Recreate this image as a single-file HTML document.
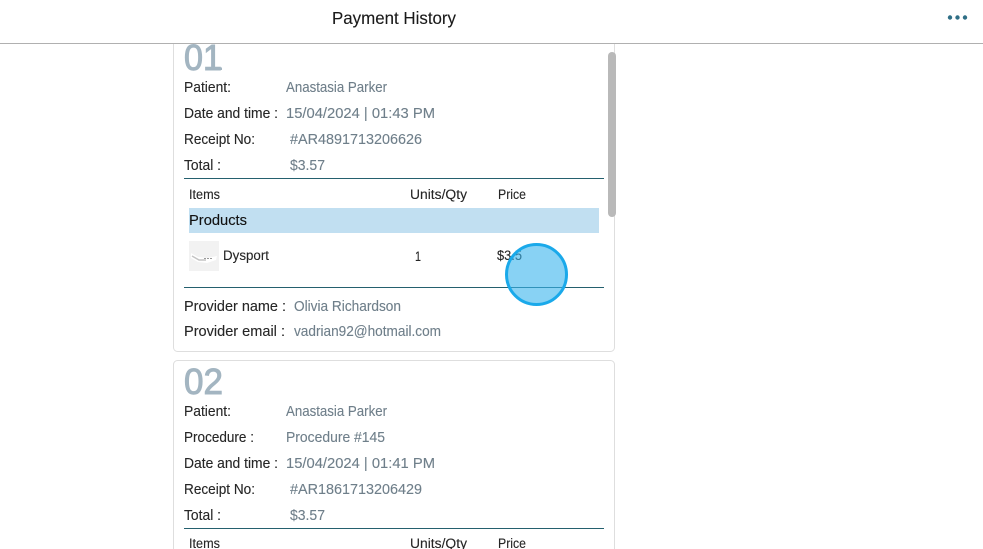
<!DOCTYPE html>
<html>
<head>
<meta charset="utf-8">
<title>Payment History</title>
<style>
html,body{margin:0;padding:0;background:#fff;width:983px;height:549px;overflow:hidden}
svg{display:block}
text{font-family:"Liberation Sans",Arial,sans-serif;font-size:14.5px;fill:#262626;stroke:#262626;stroke-width:.12px}
.v{fill:#6f7f8a;stroke:#6f7f8a}
.s{font-size:13.5px}
.n{font-size:36px;fill:#a3b5c1;stroke:#a3b5c1;stroke-width:1px}
</style>
</head>
<body>
<svg width="983" height="549" viewBox="0 0 983 549" xmlns="http://www.w3.org/2000/svg">
<rect width="983" height="549" fill="#fff"/>

<!-- Card 1 -->
<rect x="173.5" y="20.5" width="441" height="331" rx="4" fill="#fff" stroke="#dedede"/>
<text class="n" x="184" y="70" textLength="38" lengthAdjust="spacingAndGlyphs">01</text>
<rect x="208" y="67.5" width="14" height="2.5" fill="#a3b5c1"/>
<text x="184" y="92" textLength="47" lengthAdjust="spacingAndGlyphs">Patient:</text>
<text class="v" x="286" y="92" textLength="101" lengthAdjust="spacingAndGlyphs">Anastasia Parker</text>
<text x="184" y="118" textLength="94" lengthAdjust="spacingAndGlyphs">Date and time :</text>
<text class="v" x="286" y="118" textLength="149" lengthAdjust="spacingAndGlyphs">15/04/2024 | 01:43 PM</text>
<text x="184" y="144" textLength="71" lengthAdjust="spacingAndGlyphs">Receipt No:</text>
<text class="v" x="290" y="144" textLength="132" lengthAdjust="spacingAndGlyphs">#AR4891713206626</text>
<text x="184" y="170" textLength="37" lengthAdjust="spacingAndGlyphs">Total :</text>
<text class="v" x="290" y="170" textLength="35" lengthAdjust="spacingAndGlyphs">$3.57</text>
<rect x="184" y="178" width="420" height="1" fill="#24606e"/>
<text class="s" x="189" y="199" textLength="31" lengthAdjust="spacingAndGlyphs">Items</text>
<text class="s" x="410" y="199" textLength="57" lengthAdjust="spacingAndGlyphs">Units/Qty</text>
<text class="s" x="498" y="199" textLength="28" lengthAdjust="spacingAndGlyphs">Price</text>
<rect x="189" y="208" width="410" height="25" fill="#c1dff1"/>
<text x="189" y="225" textLength="58" lengthAdjust="spacingAndGlyphs" style="fill:#111;stroke:#111">Products</text>
<rect x="189" y="241" width="30" height="30" fill="#f2f2f2"/>
<path d="M191 253l7 4 9 1 10-2-1 4-9 3-9-1-7-4z" fill="#fff"/>
<path d="M192 256l7 4 7 0" stroke="#c4c4c4" stroke-width="1.5" fill="none"/>
<path d="M204 258.500h8" stroke="#9a9a9a" stroke-width="1" stroke-dasharray="2 1" fill="none"/>
<text class="s" x="223" y="260" textLength="46" lengthAdjust="spacingAndGlyphs">Dysport</text>
<text class="s" x="415" y="261" textLength="6" lengthAdjust="spacingAndGlyphs">1</text>
<text class="s" x="497" y="260" textLength="25" lengthAdjust="spacingAndGlyphs">$3.5</text>
<rect x="184" y="287" width="420" height="1" fill="#24606e"/>
<text x="184" y="311" textLength="102" lengthAdjust="spacingAndGlyphs">Provider name :</text>
<text class="v" x="294" y="311" textLength="107" lengthAdjust="spacingAndGlyphs">Olivia Richardson</text>
<text x="184" y="336" textLength="101" lengthAdjust="spacingAndGlyphs">Provider email :</text>
<text class="v" x="294" y="336" textLength="147" lengthAdjust="spacingAndGlyphs">vadrian92@hotmail.com</text>

<!-- Card 2 (runs off the bottom of the frame) -->
<path d="M173.500 549V364.500a4 4 0 0 1 4-4h433a4 4 0 0 1 4 4V549" fill="#fff" stroke="#dedede"/>
<text class="n" x="184" y="394" textLength="39" lengthAdjust="spacingAndGlyphs">02</text>
<text x="184" y="416" textLength="47" lengthAdjust="spacingAndGlyphs">Patient:</text>
<text class="v" x="286" y="416" textLength="101" lengthAdjust="spacingAndGlyphs">Anastasia Parker</text>
<text x="184" y="442" textLength="70" lengthAdjust="spacingAndGlyphs">Procedure :</text>
<text class="v" x="286" y="442" textLength="99" lengthAdjust="spacingAndGlyphs">Procedure #145</text>
<text x="184" y="468" textLength="94" lengthAdjust="spacingAndGlyphs">Date and time :</text>
<text class="v" x="286" y="468" textLength="149" lengthAdjust="spacingAndGlyphs">15/04/2024 | 01:41 PM</text>
<text x="184" y="494" textLength="71" lengthAdjust="spacingAndGlyphs">Receipt No:</text>
<text class="v" x="290" y="494" textLength="132" lengthAdjust="spacingAndGlyphs">#AR1861713206429</text>
<text x="184" y="520" textLength="37" lengthAdjust="spacingAndGlyphs">Total :</text>
<text class="v" x="290" y="520" textLength="35" lengthAdjust="spacingAndGlyphs">$3.57</text>
<rect x="184" y="528" width="420" height="1" fill="#24606e"/>
<text class="s" x="189" y="548" textLength="31" lengthAdjust="spacingAndGlyphs">Items</text>
<text class="s" x="410" y="548" textLength="57" lengthAdjust="spacingAndGlyphs">Units/Qty</text>
<text class="s" x="498" y="548" textLength="28" lengthAdjust="spacingAndGlyphs">Price</text>

<!-- Scrollbar -->
<rect x="608" y="52" width="8" height="165" rx="4" fill="#b9b9b9"/>

<!-- Click indicator -->
<circle cx="536.500" cy="274.500" r="30" fill="#38b4ec" fill-opacity=".6" stroke="#1aa9ea" stroke-width="3"/>

<!-- Header -->
<rect x="0" y="0" width="983" height="43" fill="#fff"/>
<rect x="0" y="43" width="983" height="1" fill="#b0b0b0"/>
<text x="332" y="24" textLength="124" lengthAdjust="spacingAndGlyphs" style="font-size:17.5px;fill:#1a1a1a;stroke:#1a1a1a">Payment History</text>
<circle cx="950" cy="17.500" r="2.200" fill="#2f6f86"/>
<circle cx="957.500" cy="17.500" r="2.200" fill="#2f6f86"/>
<circle cx="965" cy="17.500" r="2.200" fill="#2f6f86"/>
</svg>
</body>
</html>
